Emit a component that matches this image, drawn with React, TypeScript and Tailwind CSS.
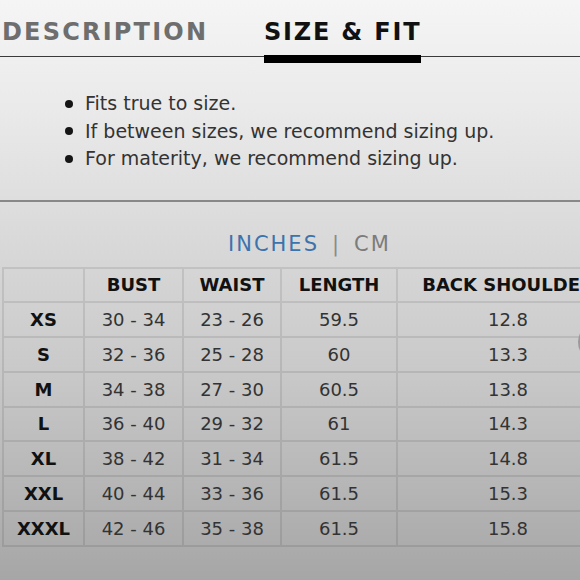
import React from "react";

const rows = [
  ["XS", "30 - 34", "23 - 26", "59.5", "12.8"],
  ["S", "32 - 36", "25 - 28", "60", "13.3"],
  ["M", "34 - 38", "27 - 30", "60.5", "13.8"],
  ["L", "36 - 40", "29 - 32", "61", "14.3"],
  ["XL", "38 - 42", "31 - 34", "61.5", "14.8"],
  ["XXL", "40 - 44", "33 - 36", "61.5", "15.3"],
  ["XXXL", "42 - 46", "35 - 38", "61.5", "15.8"],
];

const widths = ["w-[81px]", "w-[99px]", "w-[98px]", "w-[116px]", "w-[222px]"];

export default function App() {
  const font = { fontFamily: '"DejaVu Sans", "Liberation Sans", sans-serif' };
  return (
    <div
      className="relative w-[580px] h-[580px] overflow-hidden bg-[linear-gradient(180deg,#f5f5f5_0%,#e9e9e9_20%,#dadada_40%,#c8c8c8_65%,#a6a6a6_100%)]"
      style={font}
    >
      {/* Tabs */}
      <div className="relative flex h-[57px] items-start border-b border-[#3a3a3a] pt-[20px]">
        <div className="ml-[2px] w-[262px] shrink-0 text-[24px] leading-none font-bold tracking-[2.2px] text-[#6e6e6e]">
          DESCRIPTION
        </div>
        <div className="text-[24px] leading-none font-bold tracking-[1.8px] text-[#111] whitespace-nowrap">
          SIZE &amp; FIT
        </div>
        <div className="absolute left-[264px] top-[55px] h-[8px] w-[157px] bg-black" />
      </div>

      {/* Bullets */}
      <ul className="mt-[33px] ml-[65px] flex flex-col text-[19px] leading-[27.5px] text-[#333]">
        {[
          "Fits true to size.",
          "If between sizes, we recommend sizing up.",
          "For materity, we recommend sizing up.",
        ].map((t) => (
          <li key={t} className="flex items-center">
            <span className="mr-[12px] h-[8px] w-[8px] shrink-0 rounded-full bg-[#151515]" />
            <span>{t}</span>
          </li>
        ))}
      </ul>

      {/* Divider */}
      <div className="mt-[27px] h-[2px] w-full bg-[#888888]" />

      {/* Units */}
      <div className="mt-[32px] ml-[228px] flex items-center text-[21px] leading-none tracking-[2px]">
        <span className="text-[#3b73ad]">INCHES</span>
        <span className="ml-[13px] mr-[13px] text-[#8a8a8a]">|</span>
        <span className="text-[#7c7c7c]">CM</span>
      </div>

      {/* Table */}
      <div className="mt-[12px] ml-[2px] flex w-[618px] flex-col border-t-2 border-l-2 border-black/[0.09]">
        <div className="flex h-[34.75px]">
          {["", "BUST", "WAIST", "LENGTH", "BACK SHOULDER"].map((h, i) => (
            <div
              key={i}
              className={`${widths[i]} shrink-0 flex items-center justify-center border-r-2 border-b-2 border-black/[0.09] text-[18px] font-bold text-[#111] whitespace-nowrap`}
            >
              {h}
            </div>
          ))}
        </div>
        {rows.map((r) => (
          <div key={r[0]} className="flex h-[34.75px]">
            {r.map((c, i) => (
              <div
                key={i}
                className={`${widths[i]} shrink-0 flex items-center justify-center border-r-2 border-b-2 border-black/[0.09] text-[18px] whitespace-nowrap ${
                  i === 0 ? "font-bold text-[#111]" : "text-[#333]"
                }`}
              >
                {c}
              </div>
            ))}
          </div>
        ))}
      </div>

      {/* scroll button edge */}
      <div className="absolute left-[578px] top-[322px] h-[40px] w-[40px] rounded-full border-2 border-[#9a9a9a] bg-[#d6d6d6]" />
    </div>
  );
}
